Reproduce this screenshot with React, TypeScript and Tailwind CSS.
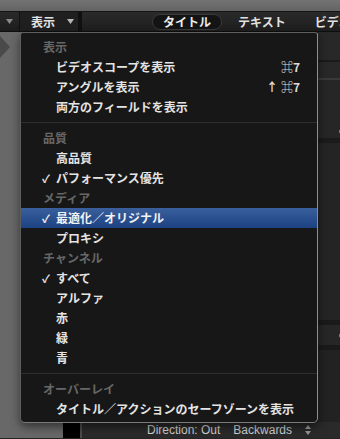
import React from 'react';

type Row =
  | { kind: 'header'; label: string }
  | { kind: 'item'; label: string; checked?: boolean; active?: boolean; keys?: string[] }
  | { kind: 'sep' };

const rows: Row[] = [
  { kind: 'header', label: '表示' },
  { kind: 'item', label: 'ビデオスコープを表示', keys: ['⌘7'] },
  { kind: 'item', label: 'アングルを表示', keys: ['↑', '⌘7'] },
  { kind: 'item', label: '両方のフィールドを表示' },
  { kind: 'sep' },
  { kind: 'header', label: '品質' },
  { kind: 'item', label: '高品質' },
  { kind: 'item', label: 'パフォーマンス優先', checked: true },
  { kind: 'header', label: 'メディア' },
  { kind: 'item', label: '最適化／オリジナル', checked: true, active: true },
  { kind: 'item', label: 'プロキシ' },
  { kind: 'header', label: 'チャンネル' },
  { kind: 'item', label: 'すべて', checked: true },
  { kind: 'item', label: 'アルファ' },
  { kind: 'item', label: '赤' },
  { kind: 'item', label: '緑' },
  { kind: 'item', label: '青' },
  { kind: 'sep' },
  { kind: 'header', label: 'オーバーレイ' },
  { kind: 'item', label: 'タイトル／アクションのセーフゾーンを表示' },
];

function Caret({ className }: { className: string }) {
  return (
    <svg width="7" height="5" viewBox="0 0 7 5" className={className}>
      <polygon points="0,0 7,0 3.5,5" fill="currentColor" />
    </svg>
  );
}

function ViewMenu() {
  return (
    <div className="absolute left-[20px] top-[32px] w-[298px] h-[391px] bg-[#171717] border border-[#5e5e5e] border-r-[#8e8e8e] border-b-[#7a7a7a] rounded-t-[3px] rounded-b-[5px] pt-[4px] shadow-[0_4px_10px_rgba(0,0,0,0.5)]">
      {rows.map((row, i) => {
        if (row.kind === 'sep') {
          return (
            <div key={i} className="h-[11px] flex items-center">
              <div className="h-px w-full bg-[#2e2e2e]" />
            </div>
          );
        }
        if (row.kind === 'header') {
          return (
            <div key={i} className="h-[20px] flex items-center pl-[22px] text-[12px] font-bold text-[#676767] leading-none">
              {row.label}
            </div>
          );
        }
        return (
          <div
            key={i}
            className={
              row.active
                ? 'h-[20px] flex items-center pl-[21px] pr-[17px] bg-gradient-to-b from-[#3a5f9c] to-[#1d4283] text-[#f2f2f2]'
                : 'h-[20px] flex items-center pl-[21px] pr-[17px] text-[#e4e4e4]'
            }
          >
            <span className="w-[14px] text-[11px] font-bold leading-none">{row.checked ? '✓' : ''}</span>
            <span className="text-[12px] font-bold leading-none">{row.label}</span>
            {row.keys && (
              <span className="ml-auto flex items-center gap-[3px] text-[12px] font-bold leading-none text-[#dcdcdc]">
                {row.keys.map((k) => (
                  <span key={k}>{k}</span>
                ))}
              </span>
            )}
          </div>
        );
      })}
    </div>
  );
}

export default function App() {
  return (
    <div className="relative w-[340px] h-[439px] overflow-hidden bg-[#242424] font-['Noto_Sans_CJK_JP','Liberation_Sans',sans-serif] select-none">
      {/* window chrome band */}
      <div className="h-[12px] bg-gradient-to-b from-[#737373] to-[#636363] border-b border-[#141414]" />

      {/* toolbar */}
      <div className="flex h-[20px] bg-gradient-to-b from-[#2a2a2a] to-[#1c1c1c] border-b border-[#0e0e0e]">
        <div className="w-[20px] shrink-0 flex items-center justify-center border-r border-[#111]">
          <Caret className="text-[#8a8a8a]" />
        </div>
        <div className="w-[58px] shrink-0 flex items-center pl-[11px] gap-[12px] bg-[#1f1f1f]">
          <span className="text-[12px] font-bold text-[#e2e2e2] leading-none">表示</span>
          <Caret className="text-[#b8b8b8]" />
        </div>
        <div className="w-[4px] shrink-0 bg-[#101010]" />
        <div className="flex-1 min-w-0 flex items-center overflow-hidden rounded-tl-[4px] bg-gradient-to-b from-[#2a2a2a] to-[#1e1e1e] whitespace-nowrap">
          <div className="ml-[70px] w-[70px] h-[16px] shrink-0 rounded-full bg-[#141414] border border-[#3a3a3a] flex items-center justify-center text-[12px] font-bold text-[#ececec] leading-none">
            タイトル
          </div>
          <span className="ml-[16px] shrink-0 text-[12px] font-bold text-[#e2e2e2] leading-none">テキスト</span>
          <span className="ml-[29px] shrink-0 text-[12px] font-bold text-[#e2e2e2] leading-none">ビデオ</span>
        </div>
      </div>

      {/* body */}
      <div className="flex h-[406px]">
        <div className="w-[63px] bg-[#686868]">
          <svg width="12" height="26" viewBox="0 0 12 26" className="mt-[2px]">
            <polygon points="0,2 10,13 0,24" fill="#4a4a4a" />
          </svg>
        </div>
        <div className="w-[17px] bg-black" />
        <div className="w-[2px] bg-[#4c4c4c]" />
        <div className="flex-1 flex flex-col">
          <div className="flex-1 flex">
            <div className="flex-1 bg-[#1b1b1b]" />
            <div className="w-[22px] flex flex-col bg-[#262626]">
              <div className="h-[30px] bg-[#282828] border-b-2 border-[#1a1a1a]" />
              <div className="h-[18px] bg-[#282828] border-b-2 border-[#3a3a3a]" />
              <div className="h-[63px] bg-[#262626] border-b-[5px] border-[#1b1b1b]" />
              <div className="h-[177px] bg-[#242424] flex flex-col justify-start">
                <div className="ml-auto mt-[-13px] w-px h-[3px] bg-[#777]" />
              </div>
              <div className="h-[5px] bg-[#1a1a1a]" />
              <div className="h-[20px] bg-[#262626] flex items-center justify-end">
                <div className="w-px h-[3px] bg-[#777]" />
              </div>
              <div className="h-[5px] bg-[#1a1a1a]" />
              <div className="flex-1 bg-[#222222]" />
            </div>
          </div>
          <div className="h-[16px] bg-[#2a2a2a] flex items-center text-[12px] text-[#d2d2d2] font-['Liberation_Sans',sans-serif] leading-none whitespace-nowrap">
            <span className="ml-[65px]">Direction: Out</span>
            <span className="ml-[13px]">Backwards</span>
            <span className="ml-[13px] flex flex-col items-center text-[#9a9a9a]">
              <svg width="6" height="10" viewBox="0 0 6 10">
                <polygon points="3,0 6,4 0,4" fill="currentColor" />
                <polygon points="0,6 6,6 3,10" fill="currentColor" />
              </svg>
            </span>
          </div>
        </div>
      </div>

      <ViewMenu />
    </div>
  );
}
